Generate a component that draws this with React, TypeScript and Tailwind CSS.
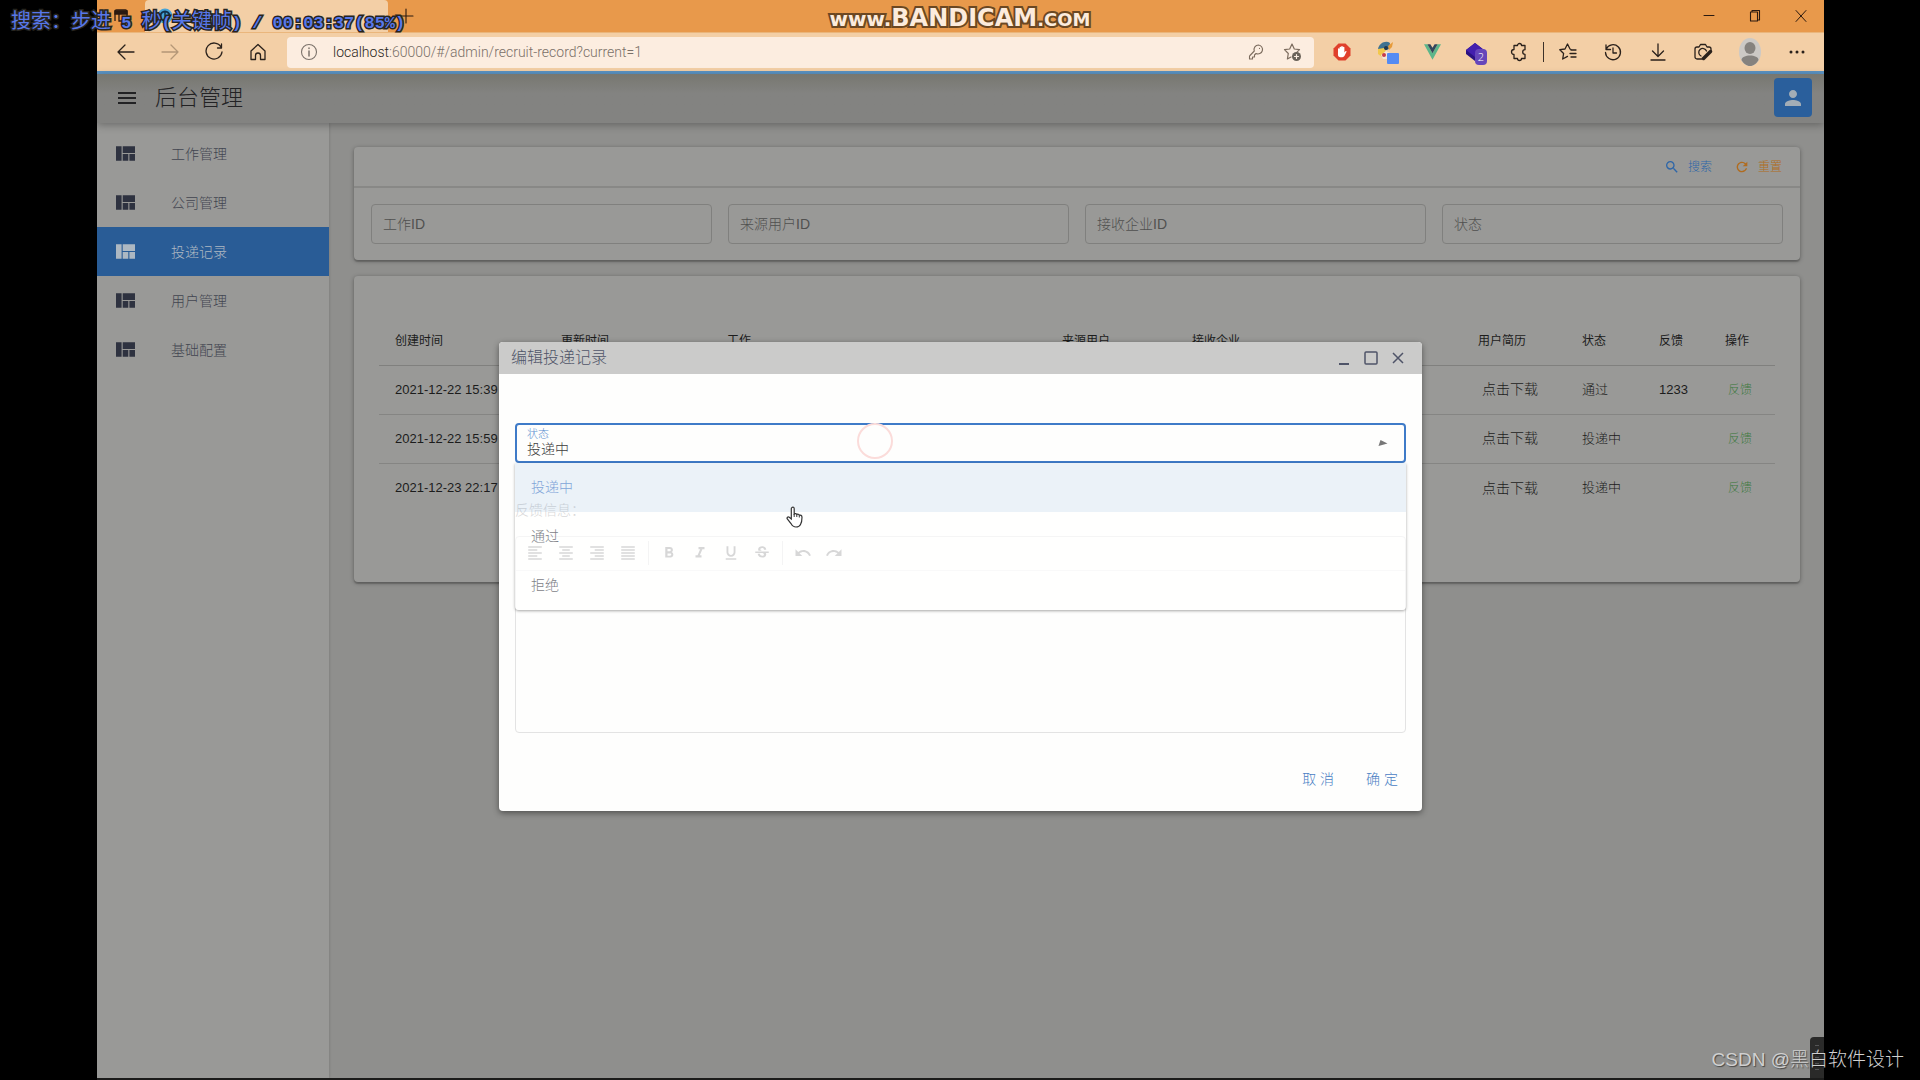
import React, { useState } from 'react';
import {
  MdFormatAlignCenter,
  MdFormatAlignJustify,
  MdFormatAlignLeft,
  MdFormatAlignRight,
  MdFormatBold,
  MdFormatItalic,
  MdFormatUnderlined,
  MdMenu,
  MdPerson,
  MdRedo,
  MdRefresh,
  MdSearch,
  MdStrikethroughS,
  MdUndo,
} from 'react-icons/md';

const menuItems = ['工作管理', '公司管理', '投递记录', '用户管理', '基础配置'];

const filters = ['工作ID', '来源用户ID', '接收企业ID', '状态'];

const statusOptions = ['投递中', '通过', '拒绝'];

const columns = [
  { label: '创建时间', width: 'w-[166px]' },
  { label: '更新时间', width: 'w-[166px]' },
  { label: '工作', width: '' },
  { label: '来源用户', width: 'w-[130px]' },
  { label: '接收企业', width: 'w-[286px]' },
  { label: '用户简历', width: 'w-[104px]' },
  { label: '状态', width: 'w-[77px]' },
  { label: '反馈', width: 'w-[66px]' },
  { label: '操作', width: 'w-[66px]' },
];

const records = [
  { createdAt: '2021-12-22 15:39', status: '通过', feedback: '1233' },
  { createdAt: '2021-12-22 15:59', status: '投递中', feedback: '' },
  { createdAt: '2021-12-23 22:17', status: '投递中', feedback: '' },
];

const editorGroups = [
  [
    { name: '左对齐', Icon: MdFormatAlignLeft },
    { name: '居中', Icon: MdFormatAlignCenter },
    { name: '右对齐', Icon: MdFormatAlignRight },
    { name: '两端对齐', Icon: MdFormatAlignJustify },
  ],
  [
    { name: '粗体', Icon: MdFormatBold },
    { name: '斜体', Icon: MdFormatItalic },
    { name: '下划线', Icon: MdFormatUnderlined },
    { name: '删除线', Icon: MdStrikethroughS },
  ],
  [
    { name: '撤销', Icon: MdUndo },
    { name: '重做', Icon: MdRedo },
  ],
];

function Stroke({ children, className = '' }: { children: React.ReactNode; className?: string }) {
  return (
    <svg
      viewBox="0 0 20 20"
      className={`h-5 w-5 ${className}`}
      fill="none"
      stroke="currentColor"
      strokeWidth="1.3"
      strokeLinecap="round"
      strokeLinejoin="round"
    >
      {children}
    </svg>
  );
}

function QuiltIcon() {
  return (
    <svg viewBox="4 5 17 13" className="h-[15px] w-[19px]" fill="currentColor">
      <path d="M10 18h5v-6h-5v6zm-6 0h5V5H4v13zm12 0h5v-6h-5v6zM10 5v6h11V5H10z" />
    </svg>
  );
}

function TitleBar() {
  return (
    <div className="flex h-8 items-center bg-[#e8994b] text-[#2b1a10]">
      <button aria-label="标签页操作" className="ml-[14px] flex h-8 w-5 items-center justify-center">
        <svg viewBox="0 0 16 16" className="h-4 w-4" fill="none" stroke="currentColor" strokeWidth="1.3">
          <path d="M2 13V3.5A1.5 1.5 0 0 1 3.500 2h9A1.500 1.500 0 0 1 14 3.500V13H6V6" />
          <path d="M2 3h12v3H2z" fill="currentColor" />
        </svg>
      </button>
      <div className="ml-[14px] flex h-8 w-[243px] items-center rounded-t bg-[#f3cfa6] px-3">
        <svg viewBox="0 0 16 16" className="h-4 w-4">
          <circle cx="8" cy="8" r="7.500" fill="#45a3d8" />
          <circle cx="8" cy="8" r="4.500" fill="none" stroke="#12324c" strokeWidth="2" />
          <path d="M8 3.500V8l3.500 2" fill="none" stroke="#12324c" strokeWidth="1.500" />
        </svg>
      </div>
      <button aria-label="新建标签页" className="ml-2">
        <Stroke>
          <path d="M10 3v14M3 10h14" strokeWidth="1.1" />
        </Stroke>
      </button>
      <div className="ml-auto flex items-center gap-[26px] pr-[13px]">
        <button aria-label="最小化">
          <Stroke>
            <path d="M5 9.500h10" strokeWidth="1" />
          </Stroke>
        </button>
        <button aria-label="还原">
          <Stroke>
            <path d="M5.500 6h7v9h-7zM7 6V4.500h7.500v9.500H13" strokeWidth="1.1" />
          </Stroke>
        </button>
        <button aria-label="关闭窗口">
          <Stroke>
            <path d="M5 4.500l10 11M15 4.500l-10 11" strokeWidth="1" />
          </Stroke>
        </button>
      </div>
    </div>
  );
}

function AddressBar() {
  return (
    <div className="flex h-[39px] items-center border-t border-[#eab67c] bg-[#f3cfa6] pl-[19px] pr-[17px] text-[#2a211b]">
      <div className="flex gap-6">
        <button aria-label="后退">
          <Stroke>
            <path d="M18 10H2M9 3l-7 7 7 7" />
          </Stroke>
        </button>
        <button aria-label="前进" className="text-[#b49777]">
          <Stroke>
            <path d="M2 10h16M11 3l7 7-7 7" />
          </Stroke>
        </button>
        <button aria-label="刷新">
          <Stroke>
            <path d="M17 5A8 8 0 1 0 18 10M17.500 2v4h-4" />
          </Stroke>
        </button>
        <button aria-label="主页">
          <Stroke>
            <path d="M3 9l7-6.500L17 9v8.500h-4.500v-4a2.500 2.500 0 0 0-5 0v4H3z" />
          </Stroke>
        </button>
      </div>

      <div className="ml-[19px] flex h-[31px] flex-1 items-center rounded bg-[#fcede0] px-3">
        <Stroke className="text-[#7c736b]">
          <circle cx="10" cy="10" r="7.500" strokeWidth="1.1" />
          <path d="M10 9v5M10 6v.5" strokeWidth="1.500" />
        </Stroke>
        <div className="ml-[14px] flex-1 font-['Roboto','Noto_Sans',sans-serif] text-sm">
          <span className="text-[#2a2520]">localhost</span>
          <span className="text-[#7a7068]">:60000/#/admin/recruit-record?current=1</span>
        </div>
        <div className="flex gap-4 text-[#7c6c5e]">
          <Stroke>
            <path
              d="M12.500 3a4.500 4.500 0 0 0-4.200 6L4 13.500a1.500 1.500 0 0 0-.5 1V17h3v-2h2v-2l1.500-1.500A4.500 4.500 0 1 0 12.500 3zM13.500 6.200v.3"
              strokeWidth="1.1"
            />
          </Stroke>
          <Stroke>
            <path
              d="M10 2l2.300 5 5.200.7-3 3M10 2L7.700 7l-5.200.7 3.800 3.800-.9 5.500L9 15"
              strokeWidth="1.2"
            />
            <circle cx="14.500" cy="14.500" r="4.500" fill="#6a6258" stroke="none" />
            <path d="M14.500 12.500v4M12.500 14.500h4" stroke="#fcede0" strokeWidth="1.2" />
          </Stroke>
        </div>
      </div>

      <div className="ml-[18px] flex items-center gap-6">
        <svg viewBox="0 0 20 20" className="h-5 w-5">
          <path d="M6.500 1.500h7l5 5v7l-5 5h-7l-5-5v-7z" fill="#e0402c" />
          <path
            d="M6 9.500V7a.8.8 0 0 1 1.600 0v2V5.500a.8.8 0 0 1 1.600 0V9 4.800a.8.8 0 0 1 1.600 0V9 5.500a.8.8 0 0 1 1.600 0v5l1-1.300c.8-.6 1.400.1 1 .8l-2 4c-.8 1.500-5 1.700-6 .3-.6-.8-.4-3-.4-4.800z"
            fill="#fff"
          />
        </svg>
        <svg viewBox="0 0 24 24" className="h-6 w-6">
          <path d="M2 9C3 3 10 0 14 3l-1 6-6 2z" fill="#3f7291" />
          <path d="M2 9l6-1 2 3-4 6-4-3z" fill="#f2c84c" />
          <path d="M12 6l5-4-1 5-3 3z" fill="#e79b3a" />
          <path d="M5 15l5-4 4 2v6H7z" fill="#f3e6da" />
          <circle cx="8" cy="15" r="2" fill="#c63c4a" />
          <circle cx="10" cy="8" r="2" fill="#22384c" />
          <rect x="11" y="13" width="12" height="11" rx="1" fill="#548bf3" />
        </svg>
        <svg viewBox="0 0 20 20" className="h-5 w-[17px]">
          <path d="M0 1h4l6 10.500L16 1h4L10 19z" fill="#5db68a" />
          <path d="M4 1h3.500L10 5l2.500-4H16l-6 10.500z" fill="#33465c" />
        </svg>
        <div className="relative">
          <svg viewBox="0 0 20 20" className="h-5 w-5">
            <path d="M10 1l9 7v4l-9 7-9-7V8z" fill="#2a1280" />
            <path d="M10 1l9 7-9 7-9-7z" fill="#431fae" />
          </svg>
          <span className="absolute left-[10px] top-[7px] h-4 w-3 rounded-sm bg-[#6646ba] text-center font-['Open_Sans',sans-serif] text-[11px] leading-4 text-white">
            2
          </span>
        </div>
        <Stroke>
          <path d="M6 3.500h2.500a2 2 0 0 1 4 0H16v4.200a1.800 1.800 0 1 0 0 4.600v4.200h-3.500a2 2 0 0 1-4 0H5v-4a2.500 2.500 0 0 1 0-5v-4z" />
        </Stroke>
      </div>
      <div className="mx-[14px] h-5 w-px bg-[#3c3129]" />
      <div className="flex items-center gap-[25px]">
        <Stroke>
          <path d="M13 7.500L12 7 9.500 2 7 7l-5.200.7 3.800 3.800-.9 5.500 4.800-2.600M13 8h5M12 11.500h6M13 15h5" />
        </Stroke>
        <Stroke>
          <path d="M3 3v4.500h4.500M3.200 7A7.500 7.500 0 1 1 2.500 10.500M10 6v5h3.500" />
        </Stroke>
        <Stroke>
          <path d="M10 2v12M4.500 9l5.500 5.500L15.500 9M3 18h14" />
        </Stroke>
        <Stroke>
          <path d="M9 17H4a2 2 0 0 1-2-2V7a2 2 0 0 1 2-2h2l1.500-2.500h5L14 5h2a2 2 0 0 1 2 2v2M8 14a4 4 0 1 1 5.500-5" />
          <path d="M17.500 9.500l-7 7" strokeWidth="3.500" />
        </Stroke>
        <svg viewBox="0 0 24 28" className="h-7 w-6">
          <ellipse cx="12" cy="14" rx="11" ry="14" fill="#ccc9c5" />
          <ellipse cx="12" cy="10" rx="5.500" ry="6" fill="#85827e" />
          <path d="M3.500 22c0-6 17-6 17 0-2 3.500-5 6-8.500 6s-6.500-2.500-8.500-6z" fill="#85827e" />
        </svg>
        <svg viewBox="0 0 20 20" className="h-5 w-5" fill="currentColor">
          <circle cx="4" cy="10" r="1.500" />
          <circle cx="10" cy="10" r="1.500" />
          <circle cx="16" cy="10" r="1.500" />
        </svg>
      </div>
    </div>
  );
}

function Sidebar() {
  return (
    <nav className="w-[232px] shrink-0 bg-[#999997] pt-[6px] shadow-[1px_0_2px_rgba(0,0,0,0.1)]">
      {menuItems.map((item) => (
        <a
          key={item}
          href="#"
          className={
            item === '投递记录'
              ? 'flex h-[49px] items-center bg-[#295c96] pl-[19px] text-[#adb8c2]'
              : 'flex h-[49px] items-center pl-[19px] text-[#2e3240]'
          }
        >
          <QuiltIcon />
          <span className={item === '投递记录' ? 'ml-9 text-sm' : 'ml-9 text-sm text-[#424550]'}>{item}</span>
        </a>
      ))}
    </nav>
  );
}

function FilterCard() {
  return (
    <section className="rounded bg-[#999997] shadow-[0_1px_4px_rgba(0,0,0,0.35),0_2px_1px_rgba(0,0,0,0.15)]">
      <div className="flex h-[41px] items-center justify-end gap-[22px] border-b-2 border-[#888886] pr-[18px] text-xs">
        <button className="flex items-center gap-2 text-[#2e66a8]">
          <MdSearch className="h-4 w-4" />
          搜索
        </button>
        <button className="flex items-center gap-2 text-[#b06c20]">
          <MdRefresh className="h-4 w-4" />
          重置
        </button>
      </div>
      <div className="grid grid-cols-4 gap-4 px-[17px] py-4">
        {filters.map((label) => (
          <input
            key={label}
            aria-label={label}
            placeholder={label}
            className="h-10 w-full min-w-0 rounded border border-[#80807e] bg-transparent px-[11px] text-sm text-[#222] outline-none placeholder:text-[#50504f]"
          />
        ))}
      </div>
    </section>
  );
}

function RecordTable() {
  return (
    <section className="mt-4 rounded bg-[#999997] px-[25px] pb-[70px] pt-[41px] shadow-[0_1px_4px_rgba(0,0,0,0.35),0_2px_1px_rgba(0,0,0,0.15)]">
      <table className="w-full table-fixed border-collapse text-left text-[13px] text-[#1c1c1c]">
        <thead>
          <tr className="h-12 border-b border-[#80807e]">
            {columns.map((col) => (
              <th key={col.label} className={`pl-4 text-xs font-normal ${col.width}`}>
                {col.label}
              </th>
            ))}
          </tr>
        </thead>
        <tbody>
          {records.map((row) => (
            <tr key={row.createdAt} className="h-[49px] border-b border-[#858583] last:border-b-0">
              <td className="whitespace-nowrap pl-4">{row.createdAt}</td>
              <td />
              <td />
              <td />
              <td />
              <td className="pl-5">
                <button className="whitespace-nowrap text-sm">点击下载</button>
              </td>
              <td className="whitespace-nowrap pl-4">{row.status}</td>
              <td className="pl-4">{row.feedback}</td>
              <td className="pl-[19px]">
                <button className="text-xs text-[#3f7a41]">反馈</button>
              </td>
            </tr>
          ))}
        </tbody>
      </table>
    </section>
  );
}

function StatusSelect() {
  const [status, setStatus] = useState('投递中');

  return (
    <div className="relative">
      <div className="relative h-10">
        <label htmlFor="status" className="absolute left-3 top-1 text-[11px] leading-[14px] text-[#5a8fd0]">
          状态
        </label>
        <select
          id="status"
          value={status}
          onChange={(e) => setStatus(e.target.value)}
          className="h-10 w-full appearance-none rounded border-2 border-[#3f7bc8] bg-transparent pl-[10px] pt-3 text-sm text-[#3c3c3c] outline-none"
        >
          {statusOptions.map((option) => (
            <option key={option}>{option}</option>
          ))}
        </select>
        <svg viewBox="0 0 10 8" className="absolute right-[18px] top-4 h-2 w-[10px]" fill="#777">
          <path d="M2.500 1L9.500 4.500 0.500 7z" />
        </svg>
      </div>

      <ul
        role="listbox"
        aria-label="状态"
        className="absolute inset-x-0 top-full z-10 rounded-b bg-white/65 shadow-[0_1px_3px_rgba(0,0,0,0.35)]"
      >
        {statusOptions.map((option) => (
          <li
            key={option}
            role="option"
            aria-selected={option === status}
            onClick={() => setStatus(option)}
            className={
              option === status
                ? 'flex h-[49px] items-center bg-[#3f7bc8]/10 px-4 text-sm text-[#82a6d8]'
                : 'flex h-[49px] items-center px-4 text-sm text-[#7e8288]'
            }
          >
            {option}
          </li>
        ))}
      </ul>
    </div>
  );
}

function RichEditor() {
  return (
    <div className="mt-4 rounded border border-[#e3e3e3]">
      <div className="flex h-[34px] items-center gap-[13px] border-b border-[#ededed] pl-[10px] text-[#8d8d8d]">
        {editorGroups.map((group, index) => (
          <React.Fragment key={index}>
            {index > 0 && <div className="-mx-[2px] h-6 w-px bg-[#e0e0e0]" />}
            {group.map(({ name, Icon }) => (
              <button key={name} aria-label={name}>
                <Icon className="h-[18px] w-[18px]" />
              </button>
            ))}
          </React.Fragment>
        ))}
      </div>
      <textarea aria-label="反馈信息" className="block h-[161px] w-full resize-none bg-transparent p-3 text-sm outline-none" />
    </div>
  );
}

function EditDialog() {
  return (
    <div
      role="dialog"
      aria-label="编辑投递记录"
      className="relative w-full max-w-[923px] rounded bg-[#fefefd] shadow-[0_2px_6px_rgba(0,0,0,0.45)]"
    >
      <header className="flex h-8 items-center rounded-t bg-[#cbcbca] pl-3 pr-4 text-[#4f5468]">
        <h2 className="text-base">编辑投递记录</h2>
        <div className="ml-auto flex gap-[11px]">
          <button aria-label="最小化对话框">
            <svg viewBox="0 0 16 16" className="h-4 w-4" stroke="currentColor" strokeWidth="2">
              <path d="M3 14h10" />
            </svg>
          </button>
          <button aria-label="最大化对话框">
            <svg viewBox="0 0 16 16" className="h-4 w-4" fill="none" stroke="currentColor" strokeWidth="1.500">
              <rect x="2" y="2" width="12" height="12" rx="1" />
            </svg>
          </button>
          <button aria-label="关闭对话框">
            <svg viewBox="0 0 16 16" className="h-4 w-4" stroke="currentColor" strokeWidth="1.500">
              <path d="M3 3l10 10M13 3L3 13" />
            </svg>
          </button>
        </div>
      </header>

      <div className="px-4 pt-[49px]">
        <StatusSelect />
        <p className="mt-[37px] text-sm text-[#8f8f8f]">反馈信息：</p>
        <RichEditor />
      </div>

      <footer className="flex justify-end px-2 pb-[14px] pt-7">
        <button className="h-9 px-4 text-sm text-[#4a80c4]">取 消</button>
        <button className="h-9 px-4 text-sm text-[#4a80c4]">确 定</button>
      </footer>

      {/* click ripple and pointer */}
      <div className="absolute left-[358px] top-[81px] h-9 w-9 rounded-full border-2 border-[#fbdcda]" />
      <svg viewBox="0 0 18 22" className="absolute left-[287px] top-[164px] z-20 h-[22px] w-[18px]">
        <path
          d="M6 1.500c1-.8 2.200 0 2.200 1.200V8c1-.8 2.300-.4 2.600.4 1-.5 2.200-.2 2.500.8 1.200-.4 2.700.2 2.700 2 0 3.300-.4 5.300-1.500 7.300C13.500 20.500 12 21 10 21c-2.500 0-3.800-1.200-5-3.500L1.300 13c-.8-1.300.6-2.700 2-1.800L5.300 13V2.700c0-.5.3-.9.7-1.200z"
          fill="#fff"
          stroke="#333"
          strokeWidth="1.200"
        />
        <path d="M8.200 8v3M10.800 8.600V11M13.300 9.400V11.500" stroke="#333" strokeWidth="1" />
      </svg>
    </div>
  );
}

export default function App() {
  return (
    <div className="relative min-h-screen bg-black pl-[97px] pr-24 font-['Liberation_Sans','Noto_Sans_CJK_SC',sans-serif] font-light">
      <div className="flex min-h-screen flex-col border-b-2 border-[#1c1c1b]">
        <TitleBar />
        <AddressBar />

        <div className="relative flex flex-1 flex-col border-t-[3px] border-[#5c94c4] bg-[#8f8f8d]">
          <header className="z-10 flex h-[49px] items-center bg-[#828280] bg-linear-to-b from-[#777770] to-[#838381] to-40% pb-[2px] pl-[18px] pr-3 text-[#222224] shadow-[0_2px_8px_rgba(0,0,0,0.3)]">
            <button aria-label="菜单">
              <MdMenu className="h-6 w-6" />
            </button>
            <h1 className="ml-4 text-[22px]">后台管理</h1>
            <button
              aria-label="个人中心"
              className="ml-auto flex h-[39px] w-[38px] items-center justify-center rounded bg-[#2a5f9c] text-[#a3adb6]"
            >
              <MdPerson className="h-6 w-6" />
            </button>
          </header>

          <div className="flex flex-1">
            <Sidebar />
            <main className="min-w-0 flex-1 py-6 pl-[25px] pr-6">
              <FilterCard />
              <RecordTable />
            </main>
          </div>

          <div className="absolute inset-0 z-20 flex items-center justify-center">
            <EditDialog />
          </div>

          <div className="absolute bottom-0 right-0 z-20 flex h-[41px] w-[14px] flex-col items-center justify-between rounded-tl bg-[#2a2a29] py-2">
            <i className="h-px w-1 bg-[#555]" />
            <i className="h-px w-1 bg-[#555]" />
            <i className="h-px w-1 bg-[#555]" />
            <i className="h-px w-1 bg-[#555]" />
            <i className="h-px w-1 bg-[#555]" />
          </div>
        </div>
      </div>

      {/* player overlays */}
      <div className="absolute left-[11px] top-[9px] z-30 whitespace-pre font-['Liberation_Mono','Noto_Sans_CJK_SC',monospace] text-[17px] font-bold leading-[26px] text-[#5878ea] [-webkit-text-stroke:3px_#26241f] [paint-order:stroke_fill]">
        <span className="text-xl font-normal">搜索：步进</span> 5 <span className="text-xl font-normal">秒</span>(
        <span className="text-xl font-normal">关键帧</span>) / 00:03:37(85%)
      </div>
      <div className="absolute inset-x-0 top-1 z-30 flex items-baseline justify-center font-['DejaVu_Sans',sans-serif] font-bold leading-7 text-[#fcebdc] [-webkit-text-stroke:4px_#6b4722] [paint-order:stroke_fill]">
        <span className="text-xl leading-7">www.</span>
        <span className="text-2xl leading-7">BANDICAM</span>
        <span className="text-lg leading-7">.COM</span>
      </div>
      <div className="absolute bottom-[6px] right-4 z-30 text-[19px] leading-7 text-[#d0d0d0] [text-shadow:1px_1px_1px_rgba(0,0,0,0.5)]">
        CSDN @黑白软件设计
      </div>
    </div>
  );
}
